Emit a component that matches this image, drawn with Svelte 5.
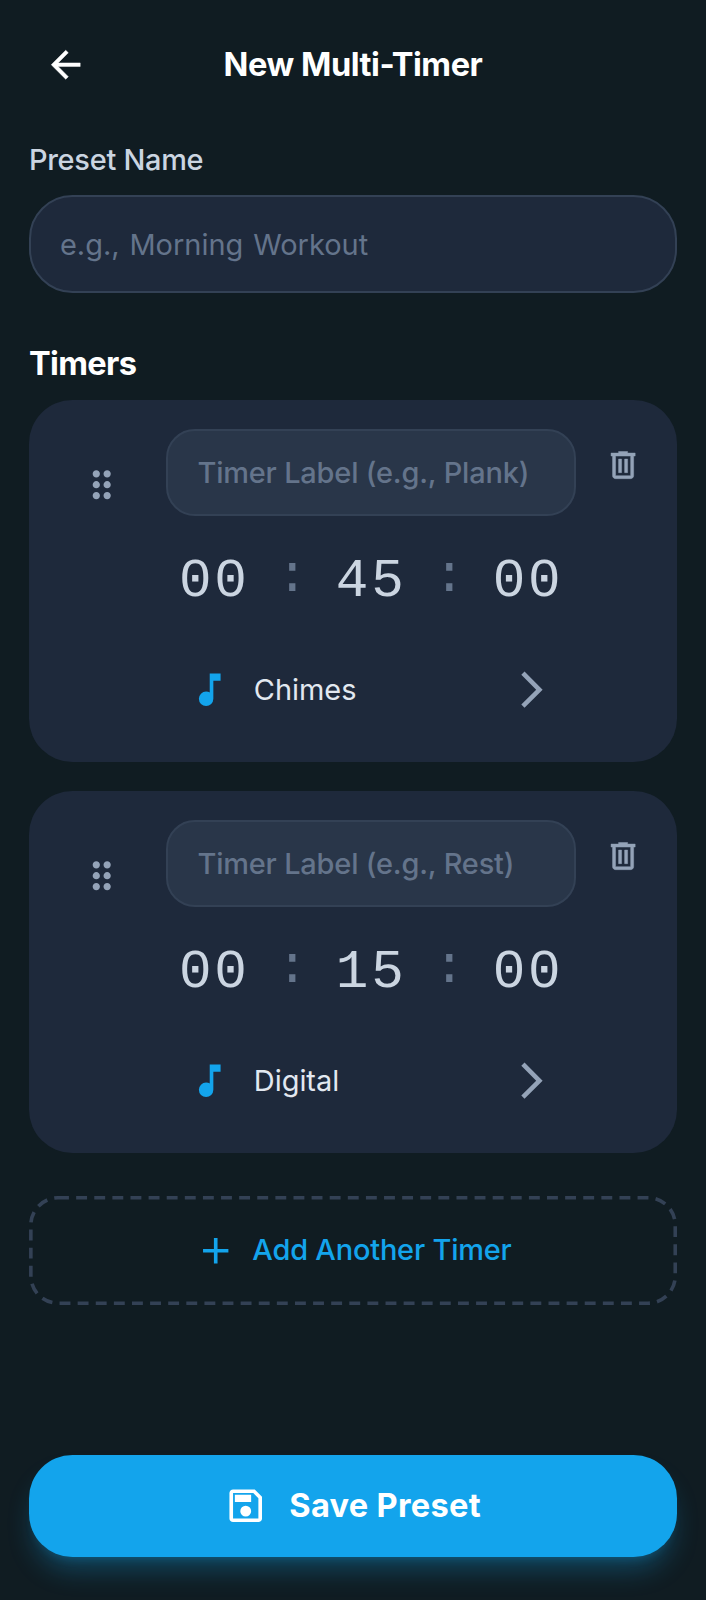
<script>
  const timers = [
    { placeholder: 'Timer Label (e.g., Plank)', time: ['00', '45', '00'], sound: 'Chimes' },
    { placeholder: 'Timer Label (e.g., Rest)', time: ['00', '15', '00'], sound: 'Digital' }
  ];
  const icons = {
    back: 'm7.825 13 5.6 5.6L12 20l-8-8 8-8 1.425 1.4-5.6 5.6H20v2z',
    drag: 'M9 20q-.825 0-1.412-.587T7 18t.588-1.412T9 16t1.413.588T11 18t-.587 1.413T9 20m6 0q-.825 0-1.412-.587T13 18t.588-1.412T15 16t1.413.588T17 18t-.587 1.413T15 20m-6-6q-.825 0-1.412-.587T7 12t.588-1.412T9 10t1.413.588T11 12t-.587 1.413T9 14m6 0q-.825 0-1.412-.587T13 12t.588-1.412T15 10t1.413.588T17 12t-.587 1.413T15 14M9 8q-.825 0-1.412-.587T7 6t.588-1.412T9 4t1.413.588T11 6t-.587 1.413T9 8m6 0q-.825 0-1.412-.587T13 6t.588-1.412T15 4t1.413.588T17 6t-.587 1.413T15 8',
    trash: 'M7 21q-.825 0-1.412-.587T5 19V6H4V4h5V3h6v1h5v2h-1v13q0 .825-.587 1.413T17 21zM17 6H7v13h10zM9 17h2V8H9zm4 0h2V8h-2z',
    note: 'M10 21q-1.65 0-2.825-1.175T6 17t1.175-2.825T10 13q.575 0 1.063.138t.937.412V3h6v4h-4v10q0 1.65-1.175 2.825T10 21',
    next: 'M8.025 22 6.25 20.225 14.475 12 6.25 3.775 8.025 2l10 10z',
    add: 'M11 13H5v-2h6V5h2v6h6v2h-6v6h-2z',
    save: 'M21 7v12q0 .825-.587 1.413T19 21H5q-.825 0-1.412-.587T3 19V5q0-.825.588-1.412T5 3h12zm-2 .85L16.15 5H5v14h14zM12 18q1.25 0 2.125-.875T15 15t-.875-2.125T12 12t-2.125.875T9 15t.875 2.125T12 18m-6-8h9V6H6z'
  };
</script>

{#snippet icon(name)}
  <svg class="icon {name}" viewBox="0 0 24 24" aria-hidden="true"><path d={icons[name]} fill-rule="evenodd" /></svg>
{/snippet}

<div class="page">
  <header>
    <button class="plain back-btn" aria-label="Back">{@render icon('back')}</button>
    <h1>New Multi-Timer</h1>
    <span class="spacer"></span>
  </header>

  <main>
    <label class="preset">
      <span>Preset Name</span>
      <input type="text" placeholder="e.g., Morning Workout" />
    </label>

    <h2>Timers</h2>
    <div class="list">
      {#each timers as timer}
        <section class="card">
          <div class="drag-cell">{@render icon('drag')}</div>
          <div class="body">
            <input class="name" type="text" placeholder={timer.placeholder} />
            <div class="time">
              <span class="num">{timer.time[0]}</span>
              <span class="colon">:</span>
              <span class="num">{timer.time[1]}</span>
              <span class="colon">:</span>
              <span class="num">{timer.time[2]}</span>
            </div>
            <button class="plain sound">
              {@render icon('note')}
              <span>{timer.sound}</span>
              {@render icon('next')}
            </button>
          </div>
          <button class="plain delete" aria-label="Delete">{@render icon('trash')}</button>
        </section>
      {/each}
    </div>

    <button class="plain add-btn">
      <svg class="outline" viewBox="0 0 648 109" aria-hidden="true">
        <rect x="1.8" y="1.8" width="644.4" height="105.4" rx="27.2" />
      </svg>
      {@render icon('add')}<span>Add Another Timer</span>
    </button>
  </main>

  <footer>
    <button class="plain save-btn">{@render icon('save')}<span>Save Preset</span></button>
  </footer>
</div>

<style>
  :global(html) { font-size: 28.964px; }
  :global(body) { background: #101c22; }
  * { box-sizing: border-box; }
  .page {
    width: 706px;
    height: 1600px;
    overflow: hidden;
    display: flex;
    flex-direction: column;
    background: #101c22;
    color: #fff;
    font: 400 1rem/1.5 Inter, sans-serif;
  }
  .plain {
    margin: 0;
    padding: 0;
    border: 0;
    background: none;
    color: inherit;
    font: inherit;
    display: flex;
    align-items: center;
  }
  .icon { display: block; width: 1.5rem; height: 1.5rem; fill: currentColor; flex: none; }
  header {
    display: flex;
    align-items: center;
    height: 4rem;
    padding: 1rem 1rem .5rem;
  }
  .back-btn, .spacer { width: 2.5rem; height: 2.5rem; justify-content: center; }
  .back-btn { padding-left: 1px; }
  .back { stroke: currentColor; stroke-width: .25; }
  h1 {
    flex: 1;
    margin: -2px 0 0;
    text-align: center;
    font-size: 1.125rem;
    line-height: 1.25;
    font-weight: 700;
    letter-spacing: -.014em;
  }
  main { display: flex; flex-direction: column; padding: .75rem 1rem 0; }
  .preset { display: flex; flex-direction: column; gap: .5rem; }
  .preset span { color: #cbd5e1; font-weight: 500; letter-spacing: -.28px; }
  input {
    width: 100%;
    margin: 0;
    outline: 0;
    color: #fff;
    font: 400 1rem/1.5 Inter, sans-serif;
  }
  input::placeholder { color: #64748b; opacity: 1; }
  .preset input {
    height: 98px;
    padding: 0 29px;
    border: 2px solid #334155;
    border-radius: 1.5rem;
    background: #1e293b;
    word-spacing: 1.7px;
  }
  h2 {
    margin: 49.6px 0 16px;
    font-size: 1.125rem;
    line-height: 41px;
    font-weight: 700;
    letter-spacing: -.02em;
  }
  .list { display: flex; flex-direction: column; gap: 1rem; }
  .card {
    display: flex;
    align-items: flex-start;
    height: 12.5rem;
    padding: 1rem;
    border-radius: 1.5rem;
    background: #1e293b;
  }
  .drag-cell { display: flex; width: 108.5px; padding: 34px 0 0 21.8px; color: #94a3b8; }
  .body { width: 409.5px; }
  .name {
    display: block;
    height: 3rem;
    padding: 0 29px;
    border: 2px solid #334155;
    border-radius: 1rem;
    background: #293649;
    font-weight: 500;
    letter-spacing: -.18px;
  }
  .time {
    display: flex;
    align-items: center;
    justify-content: space-between;
    height: 65px;
    margin: 33px 12.5px 0 12.5px;
    font: 400 1.875rem/1.2 "Liberation Mono", monospace;
    letter-spacing: .05em;
    color: #cbd5e1;
  }
  .colon { color: #64748b; padding: 0 0 10px 1px; margin-right: -1px; }
  .sound { width: 100%; margin-top: 54px; padding: 0 22px; text-align: left; color: #e2e8f0; }
  .sound span { flex: 1; margin-left: 22px; letter-spacing: -.04px; }
  .note { color: #13a4ec; }
  .next { color: #94a3b8; }
  .delete { margin-left: 29px; padding-top: 18px; color: #94a3b8; }
  .trash { width: 1.25rem; height: 1.25rem; stroke: currentColor; stroke-width: .3; }
  .add-btn {
    position: relative;
    justify-content: center;
    gap: .5rem;
    height: 109px;
    margin-top: 42.6px;
    color: #13a4ec;
    font-weight: 500;
    letter-spacing: -.2px;
  }
  .outline {
    position: absolute;
    inset: 0;
    width: 100%;
    height: 100%;
    fill: none;
    stroke: #334155;
    stroke-width: 3.62;
    stroke-dasharray: 10.9 7.21;
  }
  footer { margin-top: auto; padding: 0 1rem 1.5rem; }
  .save-btn {
    width: 100%;
    height: 3.5rem;
    justify-content: center;
    gap: .75rem;
    padding-right: 1px;
    border-radius: 1.5rem;
    background: #13a4ec;
    box-shadow: 0 18px 27px -5.4px rgba(19, 164, 236, .3), 0 7px 11px -7px rgba(19, 164, 236, .3);
    font-size: 1.125rem;
    font-weight: 700;
    letter-spacing: .3px;
  }
</style>
